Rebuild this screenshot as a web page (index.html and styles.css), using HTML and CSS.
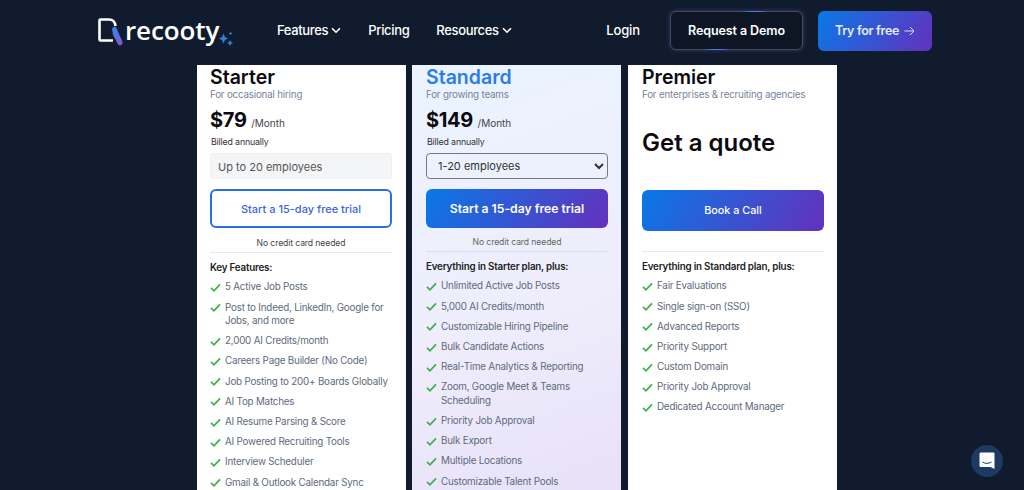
FILE: index.html
```html
<!DOCTYPE html>
<html lang="en">
<head>
    <meta charset="UTF-8">
    <meta name="viewport" content="width=device-width, initial-scale=1.0">
    <title>Recooty - Pricing</title>
    <link rel="stylesheet" href="styles.css">
</head>
<body>
    <svg class="icon-defs" width="0" height="0" aria-hidden="true">
        <symbol id="check" viewBox="0 0 12 10">
            <path d="M1 5.400 4.300 8.600 11 1.600" fill="none" stroke="#3fae4a" stroke-width="1.900"/>
        </symbol>
    </svg>

    <header class="site-header">
        <a class="logo" href="#">
            <svg class="logo-mark" width="26" height="28" viewBox="0 0 26 28">
                <path d="M2.500 1.500H11C14.500 1.500 17 4 17.500 8M2.500 1.500C1.800 1.500 1.500 2 1.500 2.500V21.500C1.500 22 1.800 22.500 2.500 22.500H15" fill="none" stroke="#fff" stroke-width="2.600" stroke-linejoin="round"/>
                <path d="M14 11C14.500 9 17 7.500 18.500 10L24.500 24C25.200 27 21 28.500 19.800 26L15 17Z" fill="url(#markGrad)"/>
                <defs>
                    <linearGradient id="markGrad" x1="0" y1="0" x2="0.400" y2="1">
                        <stop offset="0" stop-color="#2f8be6"/>
                        <stop offset="1" stop-color="#7d5bd6"/>
                    </linearGradient>
                </defs>
            </svg>
            <span class="logo-text">recooty</span>
            <svg class="logo-sparks" width="14" height="16" viewBox="0 0 14 16">
                <path d="M4.500 3.500 6 7 9 8.500 6 10 4.500 13.500 3 10 0 8.500 3 7Z" fill="#2f7fe0"/>
                <path d="M11 10 12 12 14 13 12 14 11 16 10 14 8 13 10 12Z" fill="#2f7fe0"/>
                <circle cx="11.500" cy="3.500" r="1.200" fill="#2f7fe0"/>
            </svg>
        </a>
        <nav class="main-nav">
            <a href="#">Features <svg class="caret" width="10" height="7" viewBox="0 0 10 7"><path d="M1 1.200 5 5.200 9 1.200" fill="none" stroke="#fff" stroke-width="1.600"/></svg></a>
            <a href="#">Pricing</a>
            <a href="#">Resources <svg class="caret" width="10" height="7" viewBox="0 0 10 7"><path d="M1 1.200 5 5.200 9 1.200" fill="none" stroke="#fff" stroke-width="1.600"/></svg></a>
        </nav>
        <div class="header-actions">
            <a class="login" href="#">Login</a>
            <a class="btn-demo" href="#">Request a Demo</a>
            <a class="btn-try" href="#">Try for free
                <svg width="11" height="10" viewBox="0 0 11 10"><path d="M0.500 5H10M6 1 10 5 6 9" fill="none" stroke="#d5dcf5" stroke-width="1"/></svg>
            </a>
        </div>
    </header>

    <main class="plans">
        <section class="plan plan-starter">
            <h2 class="plan-name">Starter</h2>
            <p class="plan-for">For occasional hiring</p>
            <div class="price"><strong>$79</strong> <span>/Month</span></div>
            <p class="billed">Billed annually</p>
            <div class="seats">Up to 20 employees</div>
            <a class="cta cta-outline" href="#">Start a 15-day free trial</a>
            <p class="no-card">No credit card needed</p>
            <hr class="rule">
            <h3 class="list-title">Key Features:</h3>
            <ul class="features">
                <li><svg class="tick"><use href="#check"/></svg>5 Active Job Posts</li>
                <li><svg class="tick"><use href="#check"/></svg>Post to Indeed, LinkedIn, Google for Jobs, and more</li>
                <li><svg class="tick"><use href="#check"/></svg>2,000 AI Credits/month</li>
                <li><svg class="tick"><use href="#check"/></svg>Careers Page Builder (No Code)</li>
                <li><svg class="tick"><use href="#check"/></svg>Job Posting to 200+ Boards Globally</li>
                <li><svg class="tick"><use href="#check"/></svg>AI Top Matches</li>
                <li><svg class="tick"><use href="#check"/></svg>AI Resume Parsing &amp; Score</li>
                <li><svg class="tick"><use href="#check"/></svg>AI Powered Recruiting Tools</li>
                <li><svg class="tick"><use href="#check"/></svg>Interview Scheduler</li>
                <li><svg class="tick"><use href="#check"/></svg>Gmail &amp; Outlook Calendar Sync</li>
            </ul>
        </section>

        <section class="plan plan-featured">
            <h2 class="plan-name">Standard</h2>
            <p class="plan-for">For growing teams</p>
            <div class="price"><strong>$149</strong> <span>/Month</span></div>
            <p class="billed">Billed annually</p>
            <select class="seats-select">
                <option>1-20 employees</option>
            </select>
            <a class="cta cta-solid cta-bold" href="#">Start a 15-day free trial</a>
            <p class="no-card">No credit card needed</p>
            <hr class="rule">
            <h3 class="list-title">Everything in Starter plan, plus:</h3>
            <ul class="features">
                <li><svg class="tick"><use href="#check"/></svg>Unlimited Active Job Posts</li>
                <li><svg class="tick"><use href="#check"/></svg>5,000 AI Credits/month</li>
                <li><svg class="tick"><use href="#check"/></svg>Customizable Hiring Pipeline</li>
                <li><svg class="tick"><use href="#check"/></svg>Bulk Candidate Actions</li>
                <li><svg class="tick"><use href="#check"/></svg>Real-Time Analytics &amp; Reporting</li>
                <li><svg class="tick"><use href="#check"/></svg>Zoom, Google Meet &amp; Teams Scheduling</li>
                <li><svg class="tick"><use href="#check"/></svg>Priority Job Approval</li>
                <li><svg class="tick"><use href="#check"/></svg>Bulk Export</li>
                <li><svg class="tick"><use href="#check"/></svg>Multiple Locations</li>
                <li><svg class="tick"><use href="#check"/></svg>Customizable Talent Pools</li>
            </ul>
        </section>

        <section class="plan plan-premier">
            <h2 class="plan-name">Premier</h2>
            <p class="plan-for">For enterprises &amp; recruiting agencies</p>
            <div class="quote">Get a quote</div>
            <a class="cta cta-solid cta-call" href="#">Book a Call</a>
            <hr class="rule rule-call">
            <h3 class="list-title">Everything in Standard plan, plus:</h3>
            <ul class="features">
                <li><svg class="tick"><use href="#check"/></svg>Fair Evaluations</li>
                <li><svg class="tick"><use href="#check"/></svg>Single sign-on (SSO)</li>
                <li><svg class="tick"><use href="#check"/></svg>Advanced Reports</li>
                <li><svg class="tick"><use href="#check"/></svg>Priority Support</li>
                <li><svg class="tick"><use href="#check"/></svg>Custom Domain</li>
                <li><svg class="tick"><use href="#check"/></svg>Priority Job Approval</li>
                <li><svg class="tick"><use href="#check"/></svg>Dedicated Account Manager</li>
            </ul>
        </section>
    </main>

    <button class="chat-bubble" aria-label="Open chat">
        <svg width="16" height="18" viewBox="0 0 16 18">
            <path d="M2 0.500H14C15 0.500 15.500 1 15.500 2V17L11.500 15H2C1 15 0.500 14.500 0.500 13.500V2C0.500 1 1 0.500 2 0.500Z" fill="#fff"/>
            <path d="M3.500 10C6 11.800 10 11.800 12.500 10" fill="none" stroke="#1d3a63" stroke-width="1"/>
        </svg>
    </button>
</body>
</html>
```

FILE: styles.css
```css
html, body {
    height: 490px;
    overflow: hidden;
}
body {
    margin: 0;
    background: #101c2e;
    font-family: 'Inter', 'Liberation Sans', sans-serif;
    color: #0b0b0f;
}
a {
    text-decoration: none;
    color: inherit;
}
.icon-defs {
    display: block;
    position: absolute;
}

/* header */
.site-header {
    height: 65px;
    display: flex;
    align-items: center;
    padding: 0 92px 6px 98px;
    box-sizing: border-box;
    color: #fff;
}
.logo {
    display: flex;
    align-items: center;
    width: 179px;
    flex-shrink: 0;
}
.logo-mark {
    margin-top: 4px;
    margin-right: 1px;
}
.logo-text {
    font-family: 'Open Sans', sans-serif;
    font-size: 26px;
    font-weight: 600;
    letter-spacing: -0.100px;
    line-height: 30px;
}
.logo-sparks {
    margin-top: 16px;
}
.main-nav {
    display: flex;
    gap: 27px;
    font-size: 13px;
    font-weight: 500;
    letter-spacing: -0.350px;
}
.caret {
    margin-left: 0;
    vertical-align: 1px;
}
.header-actions {
    margin-left: auto;
    padding-top: 2px;
    display: flex;
    align-items: center;
    font-size: 13px;
    font-weight: 500;
    letter-spacing: -0.100px;
}
.login {
    margin-right: 30px;
    margin-bottom: 2px;
}
.btn-demo {
    position: relative;
    width: 133px;
    height: 39px;
    display: flex;
    align-items: center;
    justify-content: center;
    box-sizing: border-box;
    border: 1px solid #46485f;
    border-radius: 6px;
    background: #0e1626;
    font-weight: 600;
    font-size: 12.500px;
    letter-spacing: -0.100px;
    box-shadow: 0 0 4px rgba(110, 100, 190, 0.45);
}
.btn-demo::before,
.btn-demo::after {
    content: "";
    position: absolute;
    width: 27px;
    height: 1px;
    background: linear-gradient(90deg, transparent, #2f8be6 40%, #7d5bd6 70%, transparent);
}
.btn-demo::before {
    top: -1px;
    left: 70px;
}
.btn-demo::after {
    bottom: -1px;
    left: 32px;
}
.btn-try {
    margin-left: 15px;
    width: 114px;
    height: 40px;
    display: flex;
    align-items: center;
    justify-content: center;
    gap: 5px;
    border-radius: 6px;
    background: linear-gradient(120deg, #0a78e6 0%, #6331bd 100%);
    font-weight: 600;
    font-size: 12.500px;
    letter-spacing: -0.300px;
    color: #e6ebfb;
}

/* pricing cards */
.plans {
    display: flex;
    justify-content: center;
    gap: 6px;
    padding-left: 10px;
}
.plan {
    width: 209px;
    height: 500px;
    box-sizing: border-box;
    padding: 0 13px 0 14px;
    background: #fff;
    flex-shrink: 0;
}
.plan-starter {
    padding: 0 14px 0 13px;
}
.plan-premier {
    margin-left: 1px;
}
.plan-featured {
    background: linear-gradient(160deg, #eaf4ff 0%, #efedfb 50%, #e4dcf8 100%);
}
.plan-name {
    margin: 0;
    font-size: 19.500px;
    font-weight: 600;
    line-height: 24px;
}
.plan-featured .plan-name {
    color: #2b7de9;
}
.plan-for {
    margin: 0;
    font-size: 9.800px;
    letter-spacing: -0.200px;
    line-height: 12px;
    color: #76849a;
}
.price {
    margin-top: 5px;
    line-height: 28px;
    height: 28px;
}
.price strong {
    font-size: 20px;
    font-weight: 700;
    letter-spacing: -0.300px;
}
.price span {
    font-size: 10px;
    color: #444;
}
.billed {
    margin: 1px 0 0 1px;
    font-size: 8.800px;
    letter-spacing: -0.150px;
    line-height: 14px;
    color: #333;
}
.seats {
    margin-top: 4px;
    height: 26px;
    line-height: 26px;
    padding-left: 7px;
    box-sizing: border-box;
    background: #f4f5f6;
    border: 1px solid #eef0f1;
    border-radius: 3px;
    font-size: 11px;
    color: #555;
}
.seats-select {
    display: block;
    width: 100%;
    margin-top: 4px;
    height: 26px;
    padding-left: 7px;
    background: transparent;
    border: 1px solid #77797f;
    border-radius: 4px;
    font-family: inherit;
    font-size: 11px;
    color: #333;
}
.cta {
    display: flex;
    align-items: center;
    justify-content: center;
    box-sizing: border-box;
    margin-top: 10px;
    height: 39px;
    border-radius: 6px;
    font-size: 11px;
    font-weight: 500;
}
.cta-outline {
    border: 2px solid #2b6fe6;
    color: #3b64e0;
}
.cta-solid {
    background: linear-gradient(120deg, #0a78e6 0%, #6331bd 100%);
    color: #fff;
}
.cta-bold {
    font-size: 12.200px;
    font-weight: 600;
}
.cta-call {
    margin-top: 0;
    height: 41px;
    font-size: 10.800px;
}
.no-card {
    margin: 9px 0 0;
    font-size: 8.600px;
    letter-spacing: -0.100px;
    line-height: 12px;
    text-align: center;
    color: #444;
}
.plan-featured .no-card {
    margin-top: 8px;
    color: #666;
}
.rule {
    margin: 3px 0 0;
    height: 1px;
    border: 0;
    background: #e9eaec;
}
.rule-call {
    margin-top: 20px;
}
.list-title {
    margin: 8px 0 3px;
    font-size: 9.800px;
    letter-spacing: -0.200px;
    font-weight: 600;
    line-height: 13px;
    color: #222;
}
.plan-featured .rule {
    background: #dcdde6;
}
.features {
    list-style: none;
    margin: 0;
    padding: 0 0 0 15px;
    font-size: 9.800px;
    letter-spacing: -0.200px;
    line-height: 13.500px;
    color: #5d6a7c;
}
.features li {
    position: relative;
    padding: 3.350px 0;
}
.tick {
    position: absolute;
    left: -15px;
    top: 6px;
    width: 11px;
    height: 9px;
}
.quote {
    margin-top: 27px;
    height: 62px;
    font-size: 24px;
    font-weight: 600;
    line-height: 30px;
}

/* chat */
.chat-bubble {
    position: fixed;
    right: 21px;
    bottom: 13px;
    width: 32px;
    height: 32px;
    border: 0;
    padding: 0;
    border-radius: 50%;
    background: #1d3a63;
    display: flex;
    align-items: center;
    justify-content: center;
}
```
